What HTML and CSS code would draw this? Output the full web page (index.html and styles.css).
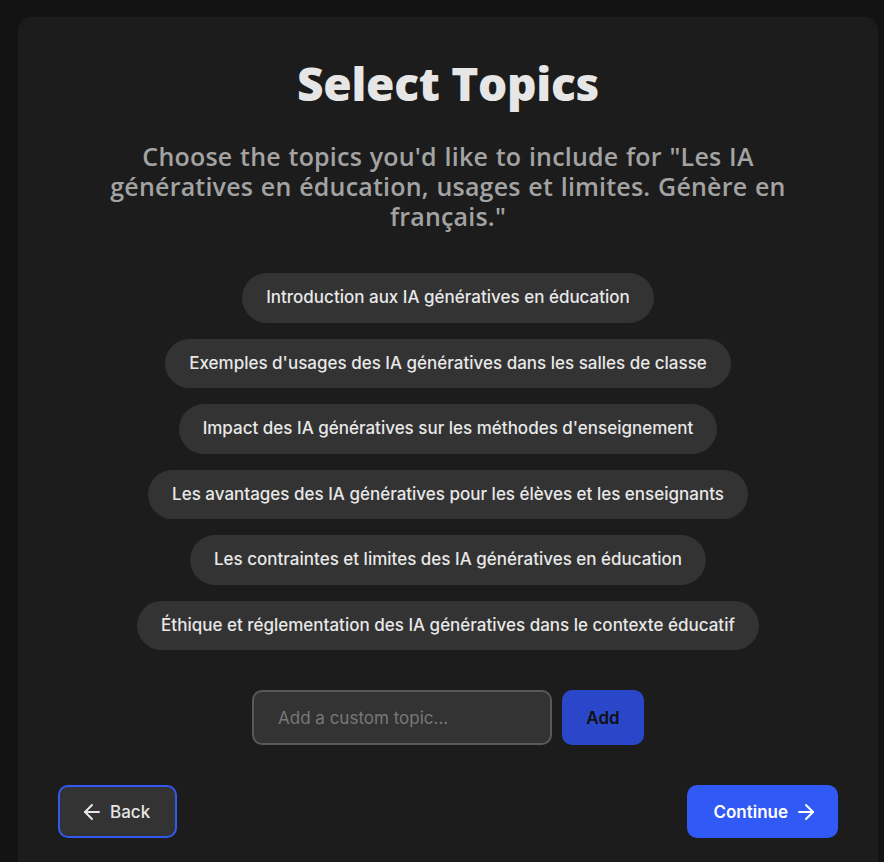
FILE: index.html
```html
<!DOCTYPE html>
<html lang="fr">
<head>
<meta charset="utf-8">
<title>Select Topics</title>
<link rel="stylesheet" href="styles.css">
</head>
<body>
<main class="card">
  <h1 class="title">Select Topics</h1>
  <p class="subtitle">Choose the topics you'd like to include for "Les IA génératives en éducation, usages et limites. Génère en français."</p>
  <ul class="topics">
    <li class="pill">Introduction aux IA génératives en éducation</li>
    <li class="pill">Exemples d'usages des IA génératives dans les salles de classe</li>
    <li class="pill">Impact des IA génératives sur les méthodes d'enseignement</li>
    <li class="pill">Les avantages des IA génératives pour les élèves et les enseignants</li>
    <li class="pill">Les contraintes et limites des IA génératives en éducation</li>
    <li class="pill">Éthique et réglementation des IA génératives dans le contexte éducatif</li>
  </ul>
  <div class="custom">
    <input class="custom-input" type="text" placeholder="Add a custom topic...">
    <button class="add-btn" type="button">Add</button>
  </div>
  <div class="nav">
    <button class="btn btn-back" type="button">
      <svg class="icon" viewBox="0 0 24 24" width="24" height="24" fill="none" stroke="currentColor" stroke-width="2" stroke-linecap="round" stroke-linejoin="round"><path d="M12 19l-7-7 7-7"/><path d="M19 12H5"/></svg>
      <span>Back</span>
    </button>
    <button class="btn btn-continue" type="button">
      <span>Continue</span>
      <svg class="icon" viewBox="0 0 24 24" width="24" height="24" fill="none" stroke="currentColor" stroke-width="2" stroke-linecap="round" stroke-linejoin="round"><path d="M5 12h14"/><path d="M12 5l7 7-7 7"/></svg>
    </button>
  </div>
</main>
</body>
</html>
```
FILE: styles.css
```css
* { box-sizing: border-box; }
html, body { height: 100%; }
body {
  margin: 0;
  background: #131313;
  font-family: Inter, "Noto Sans", sans-serif;
  overflow: hidden;
}
.card {
  margin: 17px 6px 0 18px;
  background: #1c1c1c;
  border-radius: 14px;
  padding: 38px 40px 40px;
  min-height: 900px;
  display: flex;
  flex-direction: column;
  align-items: center;
}
.title {
  margin: 0;
  font-family: "Open Sans", sans-serif;
  font-weight: 800;
  font-size: 46px;
  line-height: 56px;
  color: #e6e6e6;
  letter-spacing: -0.3px;
}
.subtitle {
  margin: 30px 0 0;
  max-width: 728px;
  text-align: center;
  font-family: "Open Sans", sans-serif;
  font-weight: 600;
  font-size: 25px;
  line-height: 30px;
  letter-spacing: 0.2px;
  word-spacing: 1px;
  color: #a3a3a3;
}
.topics {
  list-style: none;
  margin: 42px 0 0;
  padding: 0;
  display: flex;
  flex-direction: column;
  align-items: center;
  gap: 16px;
}
.pill {
  background: #333333;
  color: #e8e8e8;
  border-radius: 999px;
  padding: 12px 24px;
  font-size: 17px;
  line-height: 25.5px;
  font-weight: 500;
}
.custom {
  margin-top: 40px;
  display: flex;
  gap: 10px;
}
.custom-input {
  width: 300px;
  height: 55px;
  background: #333333;
  border: 2px solid #595959;
  border-radius: 10px;
  padding: 0 24px;
  font-family: Inter, sans-serif;
  font-size: 17px;
  color: #e8e8e8;
  outline: none;
}
.custom-input::placeholder { color: #787878; }
.add-btn {
  width: 82px;
  height: 55px;
  border: 0;
  border-radius: 10px;
  background: #2a47c9;
  color: #111111;
  font-family: Inter, sans-serif;
  font-weight: 600;
  font-size: 17px;
}
.nav {
  margin-top: 40px;
  width: 100%;
  display: flex;
  justify-content: space-between;
}
.btn {
  height: 53px;
  display: flex;
  align-items: center;
  gap: 6px;
  border-radius: 10px;
  font-family: Inter, sans-serif;
  font-size: 17px;
}
.btn-back {
  background: #333333;
  border: 2px solid #3259f0;
  color: #e6e6e6;
  font-weight: 500;
  padding: 0 25px 0 20px;
}
.btn-continue {
  background: #3059f5;
  border: 0;
  color: #ffffff;
  font-weight: 600;
  padding: 0 20px 0 26px;
}
.icon { display: block; flex: none; }
```
